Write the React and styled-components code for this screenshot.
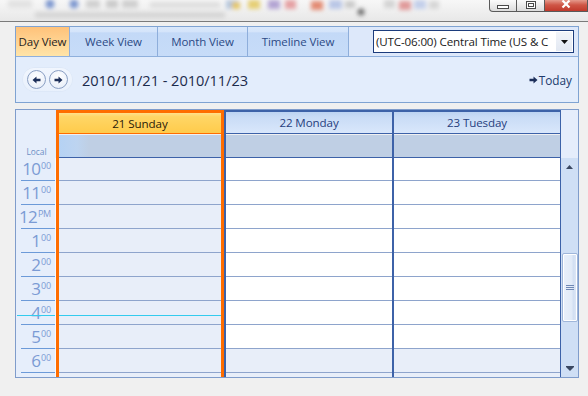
import React from 'react';
import styled, { createGlobalStyle } from 'styled-components';

const Global = createGlobalStyle`
  html, body { margin: 0; padding: 0; }
  body {
    width: 588px; height: 396px; overflow: hidden; background: #f0f0f0;
    font-family: "Open Sans", "Noto Sans", sans-serif;
  }
`;

const Page = styled.div`
  width: 588px; height: 396px; display: flex; flex-direction: column;
`;

/* ---------- window chrome ---------- */
const TitleStrip = styled.div`
  height: 21px; flex: none; display: flex;
  border-bottom: 1px solid #7b7b7b;
  background: linear-gradient(#f7f7f7, #e8e8e8);
`;
const Blurred = styled.svg`
  flex: 1; height: 21px; display: block;
`;
const WinButtons = styled.div`
  display: flex; align-items: flex-start; flex: none;
`;
const WinBtn = styled.div`
  width: ${p => p.$w}px; height: 12px; box-sizing: border-box;
  border: 1px solid #5a5a5a; border-top: none;
  border-left: ${p => (p.$first ? '1px solid #5a5a5a' : 'none')};
  border-bottom-left-radius: ${p => (p.$first ? '4px' : '0')};
  background: ${p => (p.$close
    ? 'linear-gradient(#e59a8c, #cf5646 45%, #c0392b)'
    : 'linear-gradient(#fbfbfb, #dcdcdc)')};
  display: flex; align-items: center; justify-content: center;
`;

/* ---------- toolbar ---------- */
const Body = styled.div`
  padding: 4px 10px 0 15px; display: flex; flex-direction: column;
`;
const ToolPanel = styled.div`
  width: 564px; box-sizing: border-box; border: 1px solid #7fa3d2;
  display: flex; flex-direction: column;
`;
const TabRow = styled.div`
  height: 30px; box-sizing: border-box; display: flex; align-items: stretch;
  border-bottom: 1px solid #8fb0dc; background: #dde8fa;
`;
const Tab = styled.div`
  width: ${p => p.$w}px; flex: none; box-sizing: border-box;
  border-right: 1px solid #8eaedb;
  display: flex; align-items: center; justify-content: center;
  font-size: 11.5px; letter-spacing: -0.1px;
  color: ${p => (p.$active ? '#1f1f1f' : '#2c4a85')};
  background: ${p => (p.$active
    ? 'linear-gradient(#ffc27a, #ffd391 50%, #ffe4a8)'
    : 'linear-gradient(#dae8fb 0%, #d4e4fa 17%, #c3d9f7 20%, #c7dcf8 100%)')};
`;
const TabFill = styled.div`
  flex: 1; display: flex; align-items: center; justify-content: flex-end;
  padding-right: 4px;
`;
const Select = styled.div`
  width: 201px; height: 23px; box-sizing: border-box;
  border: 1px solid #1c3c7c; background: #fff;
  display: flex; align-items: stretch;
`;
const SelectText = styled.div`
  flex: 1; white-space: nowrap;
  font-size: 11.6px; line-height: 21px; padding-left: 2px; color: #1a1a1a;
  letter-spacing: -0.15px;
`;
const SelectArrow = styled.div`
  width: 16px; margin: 1px; background: linear-gradient(#f1f4f9, #e2e8f2);
  display: flex; align-items: center; justify-content: center;
`;

const NavRow = styled.div`
  height: 45px; display: flex; align-items: center;
  background: #e3edfc; padding: 0 6px;
`;
const Pill = styled.div`
  width: 51px; height: 25px; box-sizing: border-box; border-radius: 13px;
  background: linear-gradient(#f1f6fe, #e8f0fc);
  box-shadow: 0 0 0 1px #dde8f8 inset;
  display: flex; align-items: center; gap: 3px; padding-left: 5px;
`;
const Circle = styled.div`
  width: 19px; height: 19px; box-sizing: border-box; border-radius: 50%;
  border: 1px solid #8a9fc3;
  background: radial-gradient(circle at 50% 35%, #ffffff, #e3ebf8);
  display: flex; align-items: center; justify-content: center;
`;
const DateText = styled.div`
  margin-left: 9px; font-size: 14.6px; color: #1c2b4b; letter-spacing: -0.05px;
`;
const Today = styled.div`
  margin-left: auto; display: flex; align-items: center; gap: 1px;
  font-size: 11.8px; color: #203b6c;
`;

/* ---------- calendar ---------- */
const CalPanel = styled.div`
  margin-top: 6px; width: 564px; height: 269px; box-sizing: border-box;
  border: 1px solid #7f9ccb; display: flex; overflow: hidden;
`;
const TimeCol = styled.div`
  width: 40px; flex: none; display: flex; flex-direction: column;
  background: #e6eefb;
`;
const TimeHead = styled.div`
  height: 48px; flex: none; display: flex; align-items: flex-end; justify-content: center;
  font-size: 8.4px; color: #6d8fc5; padding-left: 1px; box-sizing: border-box;
  padding-bottom: 1px;
`;
const Viewport = styled.div`
  flex: 1; overflow: hidden; position: relative;
  border-right: ${p => (p.$light ? '1px solid #f6f9ff' : 'none')};
`;
const Scroller = styled.div`
  margin-top: -1px;
`;
const TimeRow = styled.div`
  height: 24px; box-sizing: border-box; position: relative;
  display: flex; justify-content: flex-end; padding: 3px 4px 0 0;
  &::after {
    content: ''; position: absolute; left: 5px; right: 0; bottom: 0;
    height: 1px; background: #6c9ad8;
  }
`;
const HourNum = styled.span`
  font-size: 17px; line-height: 17px; color: #7b9bd4; letter-spacing: -0.8px;
  font-family: "Open Sans", sans-serif;
`;
const HourSup = styled.span`
  font-size: 9px; line-height: 10px; color: #7b9bd4; align-self: flex-start;
  margin-top: 1px; letter-spacing: -0.2px; margin-left: 1px;
`;
const NowLine = styled.div`
  position: absolute; left: ${p => p.$l}px; right: 0; top: 14px; height: 1px;
  background: #33cbee; z-index: 2;
`;

const DayCol = styled.div`
  width: ${p => p.$w}px; flex: none; box-sizing: border-box;
  display: flex; flex-direction: column; overflow: hidden;
  border-left: ${p => (p.$today ? '3px solid #ff6d00' : '2px solid #3d62a8')};
  border-right: ${p => (p.$today ? '3px solid #ff6d00' : p.$last ? '1px solid #3d62a8' : 'none')};
`;
const DayHead = styled.div`
  height: 24px; flex: none; box-sizing: border-box;
  border-top: ${p => (p.$today ? '3px solid #ff6d00' : '2px solid #3d62a8')};
  border-bottom: 1px solid ${p => (p.$today ? '#ff6d00' : '#3d62a8')};
  display: flex; align-items: center; justify-content: center;
  font-size: 11.6px; letter-spacing: -0.1px;
  color: ${p => (p.$today ? '#2a1a08' : '#26407e')};
  background: ${p => (p.$today
    ? 'linear-gradient(#ffe08d 0%, #ffd666 18%, #ffcb4b 100%)'
    : 'linear-gradient(#bcd3f2 0%, #c9dcf6 25%, #d9e7fb 100%)')};
`;
const AllDay = styled.div`
  height: 23px; flex: none; box-sizing: border-box;
  margin-top: 1px; border-bottom: 1px solid #3d62a8;
  background: ${p => (p.$today
    ? 'linear-gradient(90deg, #b5d2f4 0px, #bdd4f0 18px, #bfcfe4 30px)'
    : '#bfcfe4')};
`;
const HourCell = styled.div`
  height: 24px; box-sizing: border-box; position: relative;
  border-bottom: 1px solid #8ea4cc;
  background: ${p => (p.$work ? '#ffffff' : '#e8eef9')};
`;

const ScrollCol = styled.div`
  width: 17px; flex: none; display: flex; flex-direction: column;
`;
const ScrollHead = styled.div`
  height: 48px; flex: none; background: #e5edfb;
`;
const Track = styled.div`
  flex: 1; background: #cfdff5; display: flex; flex-direction: column; align-items: center;
`;
const ArrowBtn = styled.div`
  height: 18px; flex: none; width: 100%;
  display: flex; align-items: center; justify-content: center;
`;
const Thumb = styled.div`
  margin-top: 77px; margin-left: 1px; width: 16px; height: 69px; box-sizing: border-box;
  border: 1px solid #9fb6da; border-radius: 2px;
  box-shadow: inset 0 0 0 1px #ffffff;
  background: linear-gradient(90deg, #e9f0fb 0%, #e2ebf8 60%, #d3e0f3 75%, #dfe8f7 100%);
  display: flex; flex-direction: column; align-items: center; justify-content: center; gap: 1px;
`;
const Grip = styled.div`
  width: 8px; height: 1px; background: #6f88b5;
`;
const Spacer = styled.div` flex: 1; `;

const hours = [
  ['10', '00'], ['11', '00'], ['12', 'PM'], ['1', '00'], ['2', '00'],
  ['3', '00'], ['4', '00'], ['5', '00'], ['6', '00'], ['', ''],
];
const NOW_INDEX = 6;

const ArrowIcon = ({ dir }) => (
  <svg width="9" height="8" viewBox="0 0 9 8">
    <g transform={dir === 'left' ? '' : 'translate(9,0) scale(-1,1)'}>
      <path d="M0.5 4 L4.5 0.5 L4.5 2.8 L8.5 2.8 L8.5 5.2 L4.5 5.2 L4.5 7.5 Z" fill="#1c2f5a" />
    </g>
  </svg>
);

function Day({ label, today, last, width }) {
  return (
    <DayCol $w={width} $today={today} $last={last}>
      <DayHead $today={today}>{label}</DayHead>
      <AllDay $today={today} />
      <Viewport>
        <Scroller>
          {hours.map((h, i) => (
            <HourCell key={i} $work={!today && i < 8}>
              {today && i === NOW_INDEX && <NowLine $l={0} />}
            </HourCell>
          ))}
        </Scroller>
      </Viewport>
    </DayCol>
  );
}

export default function App() {
  return (
    <Page>
      <Global />
      <TitleStrip>
        <Blurred viewBox="0 0 489 21" preserveAspectRatio="none">
          <defs>
            <filter id="bl" x="-20%" y="-50%" width="140%" height="200%">
              <feGaussianBlur stdDeviation="2" />
            </filter>
          </defs>
          <g filter="url(#bl)">
            <rect x="35" y="12" width="190" height="6" fill="#cdcdcd" opacity="0.75" />
            <rect x="8" y="0" width="24" height="8" fill="#e2e2e2" />
            <circle cx="50" cy="4" r="4.5" fill="#7c96cf" />
            <circle cx="74" cy="4" r="4.5" fill="#7c96cf" />
            <rect x="86" y="0" width="14" height="8" fill="#d0d0d0" />
            <rect x="106" y="0" width="12" height="8" fill="#cacaca" />
            <rect x="122" y="0" width="16" height="8" fill="#cfcfcf" />
            <rect x="150" y="2" width="70" height="6" fill="#dedede" />
            <rect x="226" y="0" width="12" height="9" fill="#b6c7de" />
            <rect x="232" y="2" width="8" height="7" fill="#e4c665" />
            <rect x="248" y="0" width="12" height="9" fill="#e6cf75" />
            <rect x="268" y="0" width="12" height="9" fill="#b3a4d3" />
            <rect x="285" y="0" width="11" height="9" fill="#e5a0a3" />
            <rect x="311" y="1" width="12" height="9" fill="#e38b73" />
            <rect x="329" y="0" width="13" height="9" fill="#b9c6e6" />
            <rect x="345" y="1" width="10" height="7" fill="#c9c9c9" />
            <circle cx="361" cy="12" r="3.5" fill="#6e6e6e" />
            <rect x="384" y="0" width="11" height="8" fill="#d3d3d3" />
            <rect x="399" y="1" width="12" height="9" fill="#e09a9a" />
            <rect x="414" y="0" width="12" height="9" fill="#c3cfea" />
            <rect x="429" y="1" width="10" height="8" fill="#d6d6d6" />
          </g>
        </Blurred>
        <WinButtons>
          <WinBtn $w={28} $first>
            <svg width="12" height="6" viewBox="0 0 12 6">
              <rect x="0.5" y="2.5" width="11" height="3" fill="#fff" stroke="#4a4a4a" />
            </svg>
          </WinBtn>
          <WinBtn $w={28}>
            <svg width="10" height="9" viewBox="0 0 10 9">
              <rect x="0.5" y="0.5" width="9" height="7" fill="#fff" stroke="#4a4a4a" />
              <rect x="2.5" y="2.5" width="5" height="3" fill="none" stroke="#4a4a4a" />
            </svg>
          </WinBtn>
          <WinBtn $w={43} $close>
            <svg width="10" height="10" viewBox="0 0 10 10" style={{ marginTop: -3 }}>
              <path d="M1.5 1.5 L8.5 8.5 M8.5 1.5 L1.5 8.5" stroke="#fff" strokeWidth="2.2" />
            </svg>
          </WinBtn>
        </WinButtons>
      </TitleStrip>

      <Body>
        <ToolPanel>
          <TabRow>
            <Tab $w={54} $active>Day View</Tab>
            <Tab $w={88}>Week View</Tab>
            <Tab $w={90}>Month View</Tab>
            <Tab $w={101}>Timeline View</Tab>
            <TabFill>
              <Select>
                <SelectText>(UTC-06:00) Central Time (US &amp; C</SelectText>
                <SelectArrow>
                  <svg width="7" height="4" viewBox="0 0 7 4">
                    <path d="M0 0 L7 0 L3.5 4 Z" fill="#111" />
                  </svg>
                </SelectArrow>
              </Select>
            </TabFill>
          </TabRow>
          <NavRow>
            <Pill>
              <Circle><ArrowIcon dir="left" /></Circle>
              <Circle><ArrowIcon dir="right" /></Circle>
            </Pill>
            <DateText>2010/11/21 - 2010/11/23</DateText>
            <Today>
              <ArrowIcon dir="right" />
              <span>Today</span>
            </Today>
          </NavRow>
        </ToolPanel>

        <CalPanel>
          <TimeCol>
            <TimeHead>Local</TimeHead>
            <Viewport $light>
              <Scroller>
                {hours.map(([n, s], i) => (
                  <TimeRow key={i}>
                    {n && <HourNum>{n}</HourNum>}
                    {s && <HourSup>{s}</HourSup>}
                    {i === NOW_INDEX && <NowLine $l={1} />}
                  </TimeRow>
                ))}
              </Scroller>
            </Viewport>
          </TimeCol>
          <Day label="21 Sunday" today width={168} />
          <Day label="22 Monday" width={168} />
          <Day label="23 Tuesday" width={169} last />
          <ScrollCol>
            <ScrollHead />
            <Track>
              <ArrowBtn>
                <svg width="7" height="4" viewBox="0 0 7 4">
                  <path d="M0 4 L7 4 L3.5 0 Z" fill="#3a4862" />
                </svg>
              </ArrowBtn>
              <Thumb>
                <Grip /><Grip /><Grip />
              </Thumb>
              <Spacer />
              <ArrowBtn>
                <svg width="8" height="5" viewBox="0 0 8 5">
                  <rect x="0" y="0" width="8" height="1" fill="#3a4862" />
                  <path d="M0 1 L8 1 L4 5 Z" fill="#3a4862" />
                </svg>
              </ArrowBtn>
            </Track>
          </ScrollCol>
        </CalPanel>
      </Body>
    </Page>
  );
}
